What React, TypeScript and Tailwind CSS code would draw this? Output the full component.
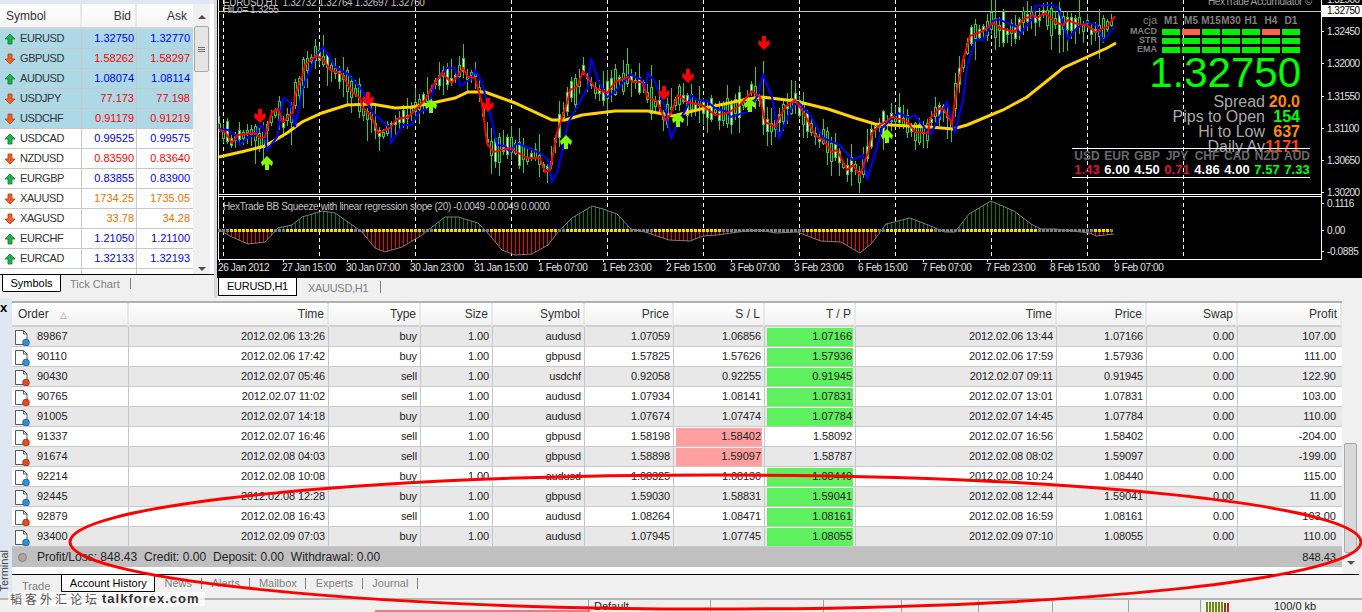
const font = { fontFamily: '"Liberation Sans", Arial, sans-serif' };

type Pt = [number, number];

const quotes = [
  ["EURUSD", "1.32750", "1.32770", "up", "blue", true],
  ["GBPUSD", "1.58262", "1.58297", "down", "red", true],
  ["AUDUSD", "1.08074", "1.08114", "up", "blue", true],
  ["USDJPY", "77.173", "77.198", "down", "red", true],
  ["USDCHF", "0.91179", "0.91219", "down", "red", true],
  ["USDCAD", "0.99525", "0.99575", "up", "blue", false],
  ["NZDUSD", "0.83590", "0.83640", "down", "red", false],
  ["EURGBP", "0.83855", "0.83900", "up", "blue", false],
  ["XAUUSD", "1734.25", "1735.05", "down", "orange", false],
  ["XAGUSD", "33.78", "34.28", "down", "orange", false],
  ["EURCHF", "1.21050", "1.21100", "up", "blue", false],
  ["EURCAD", "1.32133", "1.32193", "up", "blue", false],
] as const;

const orders = [
  ["89867", "2012.02.06 13:26", "buy", "audusd", "1.07059", "1.06856", "1.07166", "2012.02.06 13:44", "1.07166", "107.00", "tp"],
  ["90110", "2012.02.06 17:42", "buy", "gbpusd", "1.57825", "1.57626", "1.57936", "2012.02.06 17:59", "1.57936", "111.00", "tp"],
  ["90430", "2012.02.07 05:46", "sell", "usdchf", "0.92058", "0.92255", "0.91945", "2012.02.07 09:11", "0.91945", "122.90", "tp"],
  ["90765", "2012.02.07 11:02", "sell", "audusd", "1.07934", "1.08141", "1.07831", "2012.02.07 13:01", "1.07831", "103.00", "tp"],
  ["91005", "2012.02.07 14:18", "buy", "audusd", "1.07674", "1.07474", "1.07784", "2012.02.07 14:45", "1.07784", "110.00", "tp"],
  ["91337", "2012.02.07 16:46", "sell", "gbpusd", "1.58198", "1.58402", "1.58092", "2012.02.07 16:56", "1.58402", "-204.00", "sl"],
  ["91674", "2012.02.08 04:03", "sell", "gbpusd", "1.58898", "1.59097", "1.58787", "2012.02.08 08:02", "1.59097", "-199.00", "sl"],
  ["92214", "2012.02.08 10:08", "buy", "audusd", "1.08325", "1.08130", "1.08440", "2012.02.08 10:24", "1.08440", "115.00", "tp"],
  ["92445", "2012.02.08 12:28", "buy", "gbpusd", "1.59030", "1.58831", "1.59041", "2012.02.08 12:44", "1.59041", "11.00", "tp"],
  ["92879", "2012.02.08 16:43", "sell", "audusd", "1.08264", "1.08471", "1.08161", "2012.02.08 16:59", "1.08161", "103.00", "tp"],
  ["93400", "2012.02.09 07:03", "buy", "audusd", "1.07945", "1.07745", "1.08055", "2012.02.09 07:10", "1.08055", "110.00", "tp"],
];

const red: Pt[] = [[219,130],[225,132],[232,143],[238,135],[255,133],[260,138],[265,137],[272,112],[278,109],[283,122],[293,112],[295,95],[302,77],[305,65],[317,55],[325,62],[330,70],[342,74],[352,92],[360,98],[363,108],[372,117],[378,133],[390,128],[397,119],[408,117],[417,108],[425,100],[432,87],[442,73],[452,83],[463,68],[468,77],[475,78],[482,103],[487,143],[493,152],[510,148],[527,158],[540,158],[545,172],[550,170],[557,133],[567,103],[570,90],[577,87],[583,71],[595,88],[607,93],[615,82],[628,77],[632,82],[642,82],[648,98],[657,101],[665,120],[670,115],[678,95],[687,102],[702,105],[715,115],[728,113],[740,105],[752,91],[760,97],[765,122],[775,127],[785,107],[795,100],[805,115],[815,135],[823,140],[832,152],[837,150],[847,170],[853,165],[860,175],[868,153],[872,133],[880,125],[892,117],[907,121],[915,132],[928,133],[930,118],[940,108],[945,111],[952,124],[955,100],[963,60],[970,36],[983,31],[993,23],[1000,28],[1015,32],[1022,20],[1033,15],[1037,18],[1045,13],[1055,22],[1063,25],[1068,20],[1077,24],[1087,25],[1095,32],[1107,27],[1115,16]];

const blue: Pt[] = [[219,129],[228,130],[235,135],[240,145],[248,137],[257,135],[258,127],[263,126],[267,150],[277,137],[283,98],[290,102],[295,127],[303,87],[315,58],[323,47],[330,58],[335,67],[348,74],[362,90],[372,112],[390,128],[391,143],[403,125],[412,125],[418,113],[428,108],[435,83],[447,68],[455,68],[460,86],[472,78],[475,70],[482,83],[490,113],[497,145],[505,146],[510,152],[517,143],[540,153],[548,160],[552,182],[558,170],[568,123],[588,87],[591,58],[598,80],[607,97],[615,92],[630,74],[642,80],[645,88],[648,73],[655,82],[665,107],[671,138],[678,123],[687,107],[691,95],[697,100],[707,101],[715,108],[728,112],[730,117],[748,112],[758,95],[763,75],[772,97],[779,138],[792,107],[798,102],[810,115],[823,138],[840,145],[852,160],[863,155],[867,180],[877,147],[882,128],[898,113],[910,118],[915,115],[930,135],[947,102],[955,133],[963,100],[967,67],[975,40],[983,40],[993,21],[998,19],[1017,27],[1020,34],[1033,18],[1035,6],[1052,5],[1058,8],[1068,39],[1077,28],[1087,22],[1097,25],[1103,41],[1115,26]];

const gold: Pt[] = [[219,157],[245,151],[265,146],[287,133],[302,122],[322,113],[347,105],[372,104],[395,108],[412,107],[432,103],[455,98],[468,92],[485,92],[515,103],[552,120],[565,120],[582,115],[615,111],[648,111],[673,116],[705,108],[748,99],[762,97],[795,101],[828,109],[855,118],[875,124],[908,126],[930,127],[953,129],[967,125],[1003,110],[1027,97],[1063,68],[1087,57],[1107,48],[1116,43]];

const squeeze: Pt[] = [[219,230],[232,237],[248,244],[265,242],[278,228],[292,225],[302,217],[322,211],[335,213],[348,222],[362,232],[375,248],[385,252],[402,247],[422,235],[432,227],[445,217],[458,217],[478,223],[487,232],[502,250],[515,255],[532,254],[548,245],[558,232],[572,218],[592,206],[603,209],[617,214],[631,229],[645,232],[669,240],[690,241],[703,236],[717,235],[738,232],[759,230],[776,233],[797,232],[821,241],[841,242],[860,253],[872,243],[886,224],[910,218],[928,225],[945,232],[955,232],[969,214],[991,201],[1014,211],[1031,224],[1041,229],[1055,229],[1090,233],[1096,236],[1114,234]];

const downArrows: Pt[] = [[260,116],[368,99],[488,105],[664,93],[688,76],[764,43]];
const upArrows: Pt[] = [[267,163],[431,106],[566,142],[678,120],[750,105],[887,136]];
const gridX = [223, 319, 415, 511, 607, 703, 799, 895, 991, 1087, 1183];
const timeLabels = ["26 Jan 2012", "27 Jan 15:00", "30 Jan 07:00", "30 Jan 23:00", "31 Jan 15:00", "1 Feb 07:00", "1 Feb 23:00", "2 Feb 15:00", "3 Feb 07:00", "3 Feb 23:00", "6 Feb 15:00", "7 Feb 07:00", "7 Feb 23:00", "8 Feb 15:00", "9 Feb 07:00"];
const priceLabels = ["1.32900", "1.32450", "1.32000", "1.31550", "1.31100", "1.30650", "1.30200"];

const interp = (pts: Pt[], x: number) => {
  for (let i = 1; i < pts.length; i++) {
    if (x <= pts[i][0]) {
      const [x0, y0] = pts[i - 1];
      const [x1, y1] = pts[i];
      return y0 + ((y1 - y0) * (x - x0)) / (x1 - x0);
    }
  }
  return pts[pts.length - 1][1];
};

const rnd = (n: number) => {
  const v = Math.sin(n * 12.9898) * 43758.5453;
  return v - Math.floor(v);
};

const line = (pts: Pt[]) => pts.map((p) => p.join(",")).join(" ");

const bars = Array.from({ length: 224 }, (_, i) => 219 + i * 4);

function ChartDrawing() {
  return (
    <svg className="absolute inset-0" width="1145" height="277" viewBox="217 0 1145 277">
      <g shapeRendering="crispEdges">
        {gridX.map((x) => (
          <line key={x} x1={x} x2={x} y1={0} y2={259} stroke="#fff" strokeDasharray="4 3" />
        ))}
        <line x1="218" x2="218" y1="0" y2="259" stroke="#fff" />
        <line x1="1321" x2="1321" y1="0" y2="259" stroke="#fff" />
        <line x1="218" x2="1322" y1="11" y2="11" stroke="#c0c0c0" />
        <line x1="218" x2="1322" y1="194" y2="194" stroke="#fff" />
        <line x1="218" x2="1322" y1="196" y2="196" stroke="#fff" />
        <line x1="218" x2="1322" y1="259" y2="259" stroke="#fff" />
        {bars.map((x, i) => {
          const y = interp(red, x) + (rnd(i) - 0.5) * 8;
          const h = 1 + rnd(i + 300) * rnd(i + 20) * 15;
          const over = 2 + rnd(i + 600) * rnd(i + 70) * 22;
          const under = 2 + rnd(i + 900) * rnd(i + 110) * 24;
          if (x === 763) {
            return (
              <g key={x}>
                <line x1={x} x2={x} y1={61} y2={135} stroke="#32cd32" />
                <rect x={x - 1} y={98} width="2" height="26" fill="#fff" stroke="#32cd32" />
              </g>
            );
          }
          return (
            <g key={x}>
              <line x1={x} x2={x} y1={y - h - over} y2={y + h + under} stroke="#32cd32" />
              <rect x={x - 1} y={y - h} width="2" height={h * 2} fill={rnd(i + 50) > 0.55 ? "#fff" : "#000"} stroke="#32cd32" />
            </g>
          );
        })}
        {bars.map((x) => {
          const v = interp(squeeze, x);
          return Math.abs(v - 230.5) > 2 ? (
            <line key={x} x1={x} x2={x} y1={230} y2={v} stroke={v < 230 ? "#008000" : "#ff0000"} />
          ) : null;
        })}
        {bars.map((x) => {
          const v = interp(squeeze, x);
          return <rect key={x} x={x - 1} y={229} width="3" height="3" fill={Math.abs(v - 230.5) < 4 ? "#808080" : "#ffd700"} />;
        })}
      </g>
      <polyline points={line(squeeze)} fill="none" stroke="#808080" />
      <polyline points={line(gold)} fill="none" stroke="#ffd400" strokeWidth="3" />
      <polyline points={line(blue)} fill="none" stroke="#0000ff" strokeWidth="2" />
      <polyline points={line(red)} fill="none" stroke="#ff0000" strokeWidth="2" />
      {downArrows.map(([x, y]) => (
        <path key={x} transform={`translate(${x} ${y})`} fill="#ff0000" d="M-2-7H2V-1L5-3 6 1 0 7-6 1-5-3-2-1Z" />
      ))}
      {upArrows.map(([x, y]) => (
        <path key={x} transform={`translate(${x} ${y})`} fill="#7fff00" d="M-2 7H2V1L5 3 6-1 0-7-6-1-5 3-2 1Z" />
      ))}
      {[31, 63, 96, 128, 160, 192, 203, 230, 251].map((y) => (
        <line key={y} x1="1321" x2="1324" y1={y} y2={y} stroke="#fff" shapeRendering="crispEdges" />
      ))}
      {timeLabels.map((_, i) => (
        <line key={i} x1={219 + i * 64} x2={219 + i * 64} y1="259" y2="262" stroke="#fff" shapeRendering="crispEdges" />
      ))}
    </svg>
  );
}

function SignalPanel() {
  const cols = ["M1", "M5", "M15", "M30", "H1", "H4", "D1"];
  const rows = [["MACD", [1, 5]], ["STR", []], ["EMA", []]] as const;
  return (
    <div className="flex flex-col pl-[57px]">
      <div className="flex h-[13px] items-center gap-[2px] text-[10px] font-bold leading-none text-[#808080]">
        <span className="w-[31px] pr-[3px] text-right text-[11px] font-normal">cja</span>
        {cols.map((c) => (
          <span key={c} className="flex w-[18px] justify-center whitespace-nowrap">{c}</span>
        ))}
      </div>
      {rows.map(([name, off]) => (
        <div key={name} className="flex h-[9px] items-center gap-[2px]">
          <span className="w-[31px] pr-[3px] text-right text-[9px] font-bold leading-none text-[#808080]">{name}</span>
          {cols.map((c, i) => (
            <span key={c} className={(off as readonly number[]).includes(i) ? "h-[6px] w-[18px] bg-[#ff6347]" : "h-[6px] w-[18px] bg-[#00f000]"} />
          ))}
        </div>
      ))}
    </div>
  );
}

function Hud() {
  const stats = [
    ["Spread", "20.0", "text-[#ff8c00]"],
    ["Pips to Open", "154", "text-[#00ff00]"],
    ["Hi to Low", "637", "text-[#ff8c00]"],
    ["Daily Av", "1171", "text-[#ff4500]"],
  ];
  const pairs = [
    ["USD", "1.43", "text-[#dc143c]"],
    ["EUR", "6.00", "text-white"],
    ["GBP", "4.50", "text-white"],
    ["JPY", "0.71", "text-[#dc143c]"],
    ["CHF", "4.86", "text-white"],
    ["CAD", "4.00", "text-white"],
    ["NZD", "7.57", "text-[#00ff00]"],
    ["AUD", "7.33", "text-[#00ff00]"],
  ];
  return (
    <div className="absolute left-[855px] top-[14px] flex w-[240px] flex-col" style={font}>
      <SignalPanel />
      <div className="mt-[2px] h-[34px] pr-[11px] text-right text-[42px] leading-[34px] text-[#00ff00]">1.32750</div>
      <div className="mt-[4px] flex flex-col">
        {stats.map(([label, value, tone]) => (
          <div key={label} className="flex h-[15px] items-center justify-end pr-[12px] text-[16px] leading-none">
            <span className="text-[#a9a9a9]">{label}</span>
            <span className={`w-[35px] whitespace-nowrap text-right font-bold ${tone}`}>{value}</span>
          </div>
        ))}
      </div>
      <div className="relative -mt-[6px] w-[238px] border-y border-white pb-[1px] pt-[1px]">
        <div className="grid w-[240px] grid-cols-8 text-center font-bold">
          {pairs.map(([name]) => (
            <span key={name} className="h-[13px] text-[12px] leading-[13px] text-[#696969]">{name}</span>
          ))}
          {pairs.map(([name, value, tone]) => (
            <span key={name} className={`h-[13px] text-[13px] leading-[13px] ${tone}`}>{value}</span>
          ))}
        </div>
      </div>
    </div>
  );
}

function Chart() {
  const small = "text-[10px] leading-[13px] tracking-[-0.35px] whitespace-nowrap";
  return (
    <div className="relative h-[277px] overflow-hidden bg-black" style={font}>
      <ChartDrawing />
      <div className={`absolute left-[6px] -top-[4px] text-[#c0c0c0] ${small}`}>EURUSD,H1&nbsp; 1.32732 1.32764 1.32697 1.32750</div>
      <div className={`absolute left-[6px] top-[3px] text-[#c0c0c0] ${small}`}>HiLo= 1.3255</div>
      <div className={`absolute left-[991px] -top-[5px] text-[#a0a0a0] ${small}`}>HexTrade Accumulator ©</div>
      <div className={`absolute left-[6px] top-[200px] text-[#c0c0c0] ${small}`}>HexTrade BB Squeeze with linear regression slope (20) -0.0049 -0.0049 0.0000</div>
      <Hud />
      <div className="absolute left-[1110px] -top-[17px] flex flex-col text-[10px] tracking-[-0.5px] text-[#e0e0e0]">
        {priceLabels.map((p) => (
          <span key={p} className="flex h-[32.3px] items-center">{p}</span>
        ))}
      </div>
      <div className="absolute left-[1105px] top-[5px] w-[40px] bg-white pl-[5px] text-[10px] leading-[12px] tracking-[-0.5px] text-black">1.32750</div>
      <div className={`absolute left-[1110px] top-[197px] text-[#e0e0e0] ${small}`}>0.1116</div>
      <div className={`absolute left-[1110px] top-[224px] text-[#e0e0e0] ${small}`}>0.00</div>
      <div className={`absolute left-[1110px] top-[245px] text-[#e0e0e0] ${small}`}>-0.0885</div>
      <div className="absolute left-[1px] top-[261px] flex text-[#e0e0e0]">
        {timeLabels.map((t) => (
          <span key={t} className={`w-[64px] ${small}`}>{t}</span>
        ))}
      </div>
    </div>
  );
}

function ArrowIcon({ dir }: { dir: string }) {
  const up = dir === "up";
  return (
    <svg width="12" height="12" viewBox="0 0 12 12" className="shrink-0">
      <path
        d={up ? "M6 1 11 6H8V11H4V6H1Z" : "M6 11 11 6H8V1H4V6H1Z"}
        fill={up ? "#22b14c" : "#f0602a"}
        stroke={up ? "#0f7a30" : "#b83c10"}
        strokeWidth="0.8"
      />
    </svg>
  );
}

function MarketWatch() {
  const tone = { blue: "text-[#0000ff]", red: "text-[#ff0000]", orange: "text-[#f07000]" };
  return (
    <div className="flex h-[298px] w-[217px] shrink-0 flex-col border-r-[3px] border-[#d8d8d8] bg-[#f0f0f0]" style={font}>
      <div className="h-[4px] bg-[#dfe8f2]" />
      <div className="flex h-[270px] bg-white">
        <div className="w-[193px] overflow-hidden text-[11px] text-[#333]">
          <div className="flex h-[25px] border-b-2 border-[#d4d4d4] bg-gradient-to-b from-white to-[#f4f4f4] text-[12px] leading-[24px]">
            <span className="w-[82px] border-r-2 border-[#e8e8e8] pl-[6px]">Symbol</span>
            <span className="w-[55px] border-r-2 border-[#e8e8e8] pr-[4px] text-right">Bid</span>
            <span className="w-[56px] pr-[6px] text-right">Ask</span>
          </div>
          {quotes.map(([sym, bid, ask, dir, color, sel]) => (
            <div key={sym} className={`flex h-[20px] items-center border-b border-[#c8c8c8] ${sel ? "bg-[#add8e6]" : "bg-white"}`}>
              <span className="flex h-full w-[82px] items-center gap-[4px] border-r border-[#c8c8c8] pl-[4px] tracking-[-0.4px]">
                <ArrowIcon dir={dir} />
                {sym}
              </span>
              <span className={`flex h-full w-[55px] items-center justify-end border-r border-[#c8c8c8] pr-[2px] ${tone[color]}`}>{bid}</span>
              <span className={`w-[56px] pr-[3px] text-right ${tone[color]}`}>{ask}</span>
            </div>
          ))}
          <div className="flex h-[6px]">
            <span className="w-[82px] border-r border-[#c8c8c8]" />
            <span className="w-[55px] border-r border-[#c8c8c8]" />
          </div>
        </div>
        <div className="flex w-[17px] flex-col items-center bg-[#f0f0f0]">
          <span className="mt-[11px] h-0 w-0 border-x-[4px] border-b-[4px] border-x-transparent border-b-[#505050]" />
          <span className="mt-[7px] flex h-[46px] w-[15px] flex-col items-center justify-center gap-[1px] rounded-[2px] border border-[#a8a8a8] bg-[#e4e4e4]">
            <i className="h-px w-[7px] bg-[#707070]" />
            <i className="h-px w-[7px] bg-[#707070]" />
            <i className="h-px w-[7px] bg-[#707070]" />
          </span>
          <span className="mt-auto mb-[3px] h-0 w-0 border-x-[4px] border-t-[4px] border-x-transparent border-t-[#505050]" />
        </div>
      </div>
      <div className="flex h-[22px] items-start border-t border-black text-[11px] text-[#808080]">
        <span className="ml-[2px] flex h-[17px] w-[59px] items-center justify-center rounded-b-[2px] border border-t-0 border-black bg-white text-black">Symbols</span>
        <span className="ml-[9px] mt-[1px]">Tick Chart</span>
        <span className="ml-[10px] mt-[3px] h-[11px] w-px bg-[#808080]" />
      </div>
    </div>
  );
}

function DocIcon({ tone }: { tone: string }) {
  return (
    <svg width="16" height="18" viewBox="0 0 16 18" className="shrink-0">
      <path d="M1.5 2.5H9.5L13 6V16.5H1.5Z" fill="#fff" stroke="#505a68" />
      <path d="M9.5 2.5V6H13" fill="none" stroke="#505a68" />
      <circle cx="12" cy="14.5" r="3.5" fill={tone} stroke="#00000055" />
    </svg>
  );
}

function Marked({ value, tone }: { value: string; tone: string }) {
  return (
    <span className="flex h-full items-center border-r border-[#c8c8c8] px-[2px]">
      <span className={`flex h-[18px] w-full items-center justify-end pr-[1px] ${tone}`}>{value}</span>
    </span>
  );
}

const cols = "grid grid-cols-[117px_200px_92px_72px_92px_89px_91px_91px_201px_90px_91px_104px]";
const cell = "flex h-full items-center justify-end border-r border-[#c8c8c8] pr-[3px] tracking-[-0.1px]";

function Terminal() {
  const heads = ["Time", "Type", "Size", "Symbol", "Price", "S / L", "T / P", "Time", "Price", "Swap", "Profit"];
  const tabs = [
    ["News", "w-[47px]"],
    ["Alerts", "w-[48px]"],
    ["Mailbox", "w-[56px]"],
    ["Experts", "w-[57px]"],
    ["Journal", "w-[55px]"],
  ];
  return (
    <div className="flex h-[300px] text-[11px] text-[#222]" style={font}>
      <div className="relative w-[12px] shrink-0 bg-[#dfe8f2]">
        <span className="absolute left-0 top-[3px] text-[13px] font-bold leading-none text-black">x</span>
        <span className="absolute bottom-[6px] left-[-2px] text-[11px] leading-[13px] text-[#444] [writing-mode:vertical-rl] rotate-180">Terminal</span>
      </div>
      <div className="flex min-w-0 flex-1 flex-col bg-[#f0f0f0] pt-[3px]">
        <div className="flex h-[273px]">
          <div className="w-[1330px] border-t-2 border-[#b0b0b0] bg-white">
            <div className={`${cols} h-[24px] border-b-2 border-[#d0d0d0] bg-gradient-to-b from-white to-[#f2f2f2] text-[12px] leading-[22px] text-[#333]`}>
              <span className="border-r-2 border-[#e8e8e8] pl-[6px]">Order <span className="ml-[8px] text-[9px] text-[#999]">△</span></span>
              {heads.map((h, i) => (
                <span key={i} className="border-r-2 border-[#e8e8e8] pr-[3px] text-right">{h}</span>
              ))}
            </div>
            {orders.map((o, i) => (
              <div key={o[0]} className={`${cols} h-[20px] border-b border-[#c8c8c8] ${i % 2 === 0 ? "bg-[#e8e8e8]" : "bg-white"}`}>
                <span className="flex h-full items-center gap-[7px] border-r border-[#c8c8c8] pl-[2px]">
                  <DocIcon tone={o[2] === "buy" ? "#2a8fdc" : "#e8481c"} />
                  {o[0]}
                </span>
                <span className={cell}>{o[1]}</span>
                <span className={cell}>{o[2]}</span>
                <span className={cell}>1.00</span>
                <span className={cell}>{o[3]}</span>
                <span className={cell}>{o[4]}</span>
                {o[10] === "sl" ? <Marked value={o[5]} tone="bg-[#ff9f9f]" /> : <span className={cell}>{o[5]}</span>}
                {o[10] === "tp" ? <Marked value={o[6]} tone="bg-[#5ef05e]" /> : <span className={cell}>{o[6]}</span>}
                <span className={cell}>{o[7]}</span>
                <span className={cell}>{o[8]}</span>
                <span className={cell}>0.00</span>
                <span className="flex h-full items-center justify-end pr-[6px]">{o[9]}</span>
              </div>
            ))}
            <div className="flex h-[20px] items-center bg-[#c0c0c0] pl-[6px] pr-[6px]">
              <span className="h-[9px] w-[9px] rounded-full border border-[#808080] bg-[#a8a8a8]" />
              <span className="ml-[10px] flex gap-[7px] text-[12px]">
                <span>Profit/Loss: 848.43</span>
                <span>Credit: 0.00</span>
                <span>Deposit: 0.00</span>
                <span>Withdrawal: 0.00</span>
              </span>
              <span className="ml-auto">848.43</span>
            </div>
          </div>
          <div className="flex w-[17px] flex-col items-center bg-[#f0f0f0] pt-[142px]">
            <span className="h-[110px] w-[13px] rounded-[2px] border border-[#a8a8a8] bg-[#d8d8d8]" />
            <span className="mt-[8px] h-0 w-0 border-x-[4px] border-t-[4px] border-x-transparent border-t-[#505050]" />
          </div>
        </div>
        <div className="mr-[3px] flex h-[24px] items-start border-t border-black text-[#808080]">
          <span className="ml-[10px] mt-[3px]">Trade</span>
          <span className="ml-[11px] flex h-[17px] w-[94px] items-center justify-center border border-t-0 border-black bg-white text-black">Account History</span>
          {tabs.map(([name, width]) => (
            <span key={name} className={`mt-[3px] flex h-[11px] items-center justify-center border-r border-[#808080] ${width}`}>{name}</span>
          ))}
        </div>
      </div>
    </div>
  );
}

function StatusBar() {
  return (
    <div className="flex h-[14px] border-t-2 border-[#b4b4b4] bg-[#f0f0f0] text-[11px] leading-[12px] text-[#222]" style={font}>
      <div className="ml-[588px] w-[122px] border-l border-[#a0a0a0] pl-[5px]">Default</div>
      <div className="w-[113px] border-l border-[#a0a0a0]" />
      <div className="w-[78px] border-l border-[#a0a0a0]" />
      <div className="w-[77px] border-l border-[#a0a0a0]" />
      <div className="w-[74px] border-l border-[#a0a0a0]" />
      <div className="w-[76px] border-l border-[#a0a0a0]" />
      <div className="w-[72px] border-l border-[#a0a0a0]" />
      <div className="flex w-[74px] border-l border-[#a0a0a0] pl-[5px]">
        <span className="flex h-full w-[24px] items-end gap-px">
          {[10, 10, 10, 10, 9, 10, 10, 8].map((h, i) => (
            <i key={i} className={i > 5 ? "h-[9px] w-[2px] bg-[#a03020]" : "h-[10px] w-[2px] bg-[#6a8a10]"} />
          ))}
        </span>
      </div>
      <div>100/0 kb</div>
    </div>
  );
}

export default function App() {
  return (
    <div className="relative h-[612px] w-[1362px] overflow-hidden bg-[#f0f0f0]">
      <div className="flex h-[298px]">
        <MarketWatch />
        <div className="flex min-w-0 flex-1 flex-col">
          <Chart />
          <div className="flex h-[21px] items-start border-t border-black bg-[#f0f0f0] text-[11px] tracking-[-0.3px] text-[#808080]" style={font}>
            <span className="ml-[1px] flex h-[18px] w-[79px] items-center justify-center border border-t-0 border-black bg-white text-black">EURUSD,H1</span>
            <span className="ml-[11px] mt-[2px]">XAUUSD,H1</span>
            <span className="ml-[12px] mt-[3px] h-[12px] w-px bg-[#808080]" />
          </div>
        </div>
      </div>
      <Terminal />
      <StatusBar />
      <div className="absolute left-[8px] top-[592px] flex h-[14px] w-[197px] items-center bg-white/70 pl-[2px]" style={font}>
        <span className="text-[12px] tracking-[3px] text-[#555]" style={{ fontFamily: '"Noto Sans CJK SC", sans-serif' }}>韬客外汇论坛</span>
        <span className="ml-[2px] text-[13px] font-bold tracking-[1px] text-[#333]">talkforex.com</span>
      </div>
      <svg className="pointer-events-none absolute inset-0" width="1362" height="612" viewBox="0 0 1362 612">
        <ellipse cx="715.5" cy="542" rx="645.5" ry="67" fill="none" stroke="#ff0000" strokeWidth="3" />
        <line x1="375" x2="590" y1="611" y2="611" stroke="#ff0000" />
      </svg>
    </div>
  );
}
